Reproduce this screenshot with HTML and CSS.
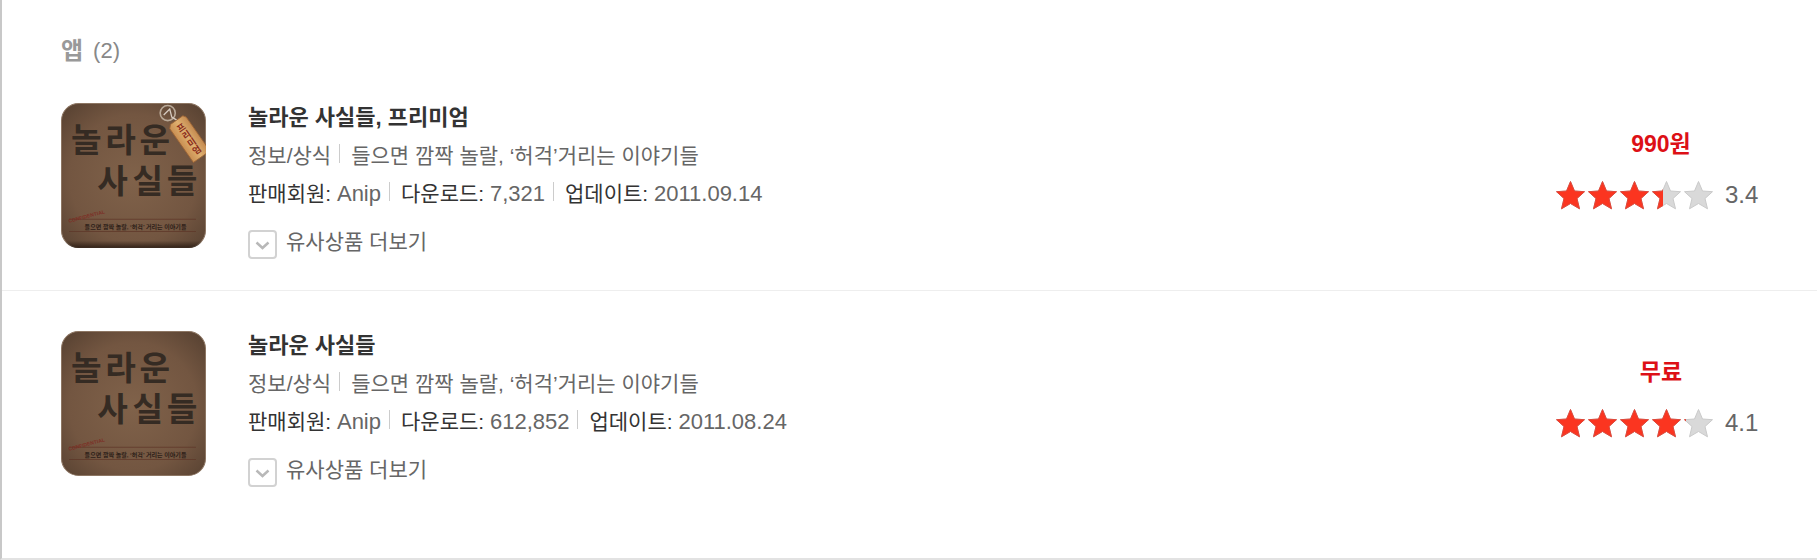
FILE: index.html
```html
<!DOCTYPE html>
<html lang="ko">
<head>
<meta charset="utf-8">
<title>앱</title>
<link rel="stylesheet" href="styles.css">
</head>
<body>
<svg class="defs" aria-hidden="true">
  <defs>
    <radialGradient id="leather" cx="50%" cy="52%" r="74%">
      <stop offset="0" stop-color="#80624a"/>
      <stop offset=".6" stop-color="#735641"/>
      <stop offset="1" stop-color="#533e2f"/>
    </radialGradient>
    <linearGradient id="gold" x1="0" y1="0" x2="1" y2="0">
      <stop offset="0" stop-color="#c98f52"/>
      <stop offset=".5" stop-color="#dfb070"/>
      <stop offset="1" stop-color="#c48a50"/>
    </linearGradient>
    <linearGradient id="base" x1="0" y1="0" x2="0" y2="1">
      <stop offset=".95" stop-color="#2b1c13" stop-opacity="0"/>
      <stop offset="1" stop-color="#2b1c13" stop-opacity=".9"/>
    </linearGradient>
    <path id="star" d="M14.500 0.500 L18.500 10 L28.500 10.700 L21 17.500 L23.500 27.800 L14.500 22.500 L5.500 27.800 L8 17.500 L0.500 10.700 L10.500 10 Z"/>
    <g id="stars">
      <use href="#star"/><use href="#star" x="32"/><use href="#star" x="64"/><use href="#star" x="96"/><use href="#star" x="128"/>
    </g>
    <g id="cover">
      <rect x=".5" y=".5" width="143" height="143" rx="17" fill="url(#leather)" stroke="#8d7663"/>
      <g class="cover-title">
        <text x="10" y="49">놀</text><text x="44" y="49">라</text><text x="78" y="49">운</text>
        <text x="36" y="89">사</text><text x="71" y="89">실</text><text x="105" y="89">들</text>
      </g>
      <path d="M8 115.500H134M8 127.500H134" stroke="#5c3527" stroke-opacity=".7"/>
      <text class="cover-stamp" x="8" y="119" transform="rotate(-15 8 119)">CONFIDENTIAL</text>
      <text class="cover-line" x="74" y="125" text-anchor="middle">들으면 깜짝 놀랄, ‘허걱’ 거리는 이야기들</text>
    </g>
  </defs>
</svg>

<main class="results">
  <h2 class="heading"><strong>앱</strong><span>(2)</span></h2>
  <ul class="list">
    <li class="item">
      <a class="thumb" href="#app1" aria-label="놀라운 사실들, 프리미엄">
        <svg viewBox="0 0 144 144">
          <use href="#cover"/>
          <rect width="144" height="144" rx="17" fill="url(#base)"/>
          <circle cx="106" cy="10" r="7.500" fill="none" stroke="#b9a998" stroke-width="1.600"/>
          <path d="M102 12l6-6 2 8 5 3" fill="none" stroke="#d6cbc0" stroke-width="1.300"/>
          <g transform="translate(112 19) rotate(-35)">
            <path d="M-7 3L-4 0H11L13 3V44H-7Z" fill="url(#gold)" stroke="#9c6435" stroke-width=".8"/>
            <g class="tag-text"><text x="3" y="12">프</text><text x="3" y="21">리</text><text x="3" y="30">미</text><text x="3" y="39">엄</text></g>
          </g>
        </svg>
      </a>
      <div class="info">
        <h3 class="title"><a href="#app1">놀라운 사실들, 프리미엄</a></h3>
        <p class="line"><span>정보/상식</span><span>들으면 깜짝 놀랄, ‘허걱’거리는 이야기들</span></p>
        <p class="line meta"><span>판매회원: <b>Anip</b></span><span>다운로드: <b>7,321</b></span><span>업데이트: <b>2011.09.14</b></span></p>
        <button class="more" type="button"><svg viewBox="0 0 29 29"><rect x="1" y="1" width="27" height="27" rx="3" fill="#fff" stroke="#d2d2d2" stroke-width="2"/><path d="M8.500 12.500l6 5.500 6-5.500" fill="none" stroke="#b8b8b8" stroke-width="2.500"/></svg><span>유사상품 더보기</span></button>
      </div>
      <div class="side">
        <strong class="price">990원</strong>
        <div class="rating">
          <span class="stars"><svg class="off" viewBox="0 0 160 29"><use href="#stars"/></svg><span class="fill" style="width:67%"><svg class="on" viewBox="0 0 160 29"><use href="#stars"/></svg></span></span>
          <span>3.4</span>
        </div>
      </div>
    </li>
    <li class="item">
      <a class="thumb" href="#app2" aria-label="놀라운 사실들"><svg viewBox="0 0 144 144"><use href="#cover"/></svg></a>
      <div class="info">
        <h3 class="title"><a href="#app2">놀라운 사실들</a></h3>
        <p class="line"><span>정보/상식</span><span>들으면 깜짝 놀랄, ‘허걱’거리는 이야기들</span></p>
        <p class="line meta"><span>판매회원: <b>Anip</b></span><span>다운로드: <b>612,852</b></span><span>업데이트: <b>2011.08.24</b></span></p>
        <button class="more" type="button"><svg viewBox="0 0 29 29"><rect x="1" y="1" width="27" height="27" rx="3" fill="#fff" stroke="#d2d2d2" stroke-width="2"/><path d="M8.500 12.500l6 5.500 6-5.500" fill="none" stroke="#b8b8b8" stroke-width="2.500"/></svg><span>유사상품 더보기</span></button>
      </div>
      <div class="side">
        <strong class="price">무료</strong>
        <div class="rating">
          <span class="stars"><svg class="off" viewBox="0 0 160 29"><use href="#stars"/></svg><span class="fill" style="width:81%"><svg class="on" viewBox="0 0 160 29"><use href="#stars"/></svg></span></span>
          <span>4.1</span>
        </div>
      </div>
    </li>
  </ul>
</main>
</body>
</html>
```
FILE: styles.css
```css
* { box-sizing: border-box; }
body {
  margin: 0;
  background: #fff;
  color: #666;
  font-family: "Liberation Sans", "Noto Sans CJK KR", sans-serif;
  font-size: 21px;
}
h2, h3, p, ul { margin: 0; padding: 0; }
a { color: inherit; text-decoration: none; }
svg { display: block; }
.defs { position: absolute; width: 0; height: 0; }

.results {
  border-left: 2px solid #c8c8c8;
  border-bottom: 2px solid #e2e2e2;
  padding-bottom: 40px;
}
.heading {
  display: flex;
  align-items: center;
  gap: 10px;
  padding: 38px 59px 0;
  height: 63px;
  font-size: 22px;
  font-weight: 400;
  line-height: 25px;
  color: #888;
}
.heading strong { font-size: 24px; font-weight: 700; color: #999; }

.list { list-style: none; }
.item {
  display: flex;
  align-items: flex-start;
  padding: 40px 51px 31px 59px;
  border-bottom: 1px solid #eee;
}
.item:last-child { border-bottom: 0; }
.thumb { flex: none; width: 145px; height: 144px; }
.cover-title { font-size: 33px; font-weight: 700; fill: #352b23; }
.cover-stamp { font-size: 5px; font-weight: 700; fill: #7c3026; }
.cover-line { font-size: 6px; font-weight: 700; fill: #2e2119; }
.tag-text { font-size: 9px; font-weight: 700; fill: #8a2d1c; text-anchor: middle; }

.info { flex: 1; min-width: 0; padding-left: 42px; }
.title {
  font-size: 22px;
  line-height: 30px;
  font-weight: 700;
  color: #333;
}
.line {
  display: flex;
  margin-top: 8px;
  line-height: 30px;
  white-space: nowrap;
}
.line span + span { display: flex; align-items: baseline; white-space: pre; }
.line span + span::before {
  content: "";
  width: 1px;
  height: 19px;
  margin: 3px 11px 0 8px;
  align-self: flex-start;
  background: #ccc;
}
.meta { color: #333; }
.meta b { font-size: 22px; font-weight: 400; color: #666; }
.more {
  display: flex;
  align-items: flex-start;
  gap: 9px;
  margin-top: 21px;
  padding: 0;
  border: 0;
  background: none;
  color: #666;
  font: inherit;
  line-height: 24px;
}
.more svg { width: 29px; height: 29px; }

.side { flex: none; width: 210px; padding-top: 27px; }
.price {
  display: block;
  font-size: 23px;
  line-height: 28px;
  text-align: center;
  color: #dd1016;
}
.rating {
  display: flex;
  align-items: center;
  gap: 9px;
  margin-top: 22px;
  font-size: 24px;
  line-height: 30px;
}
.stars { position: relative; width: 160px; height: 29px; }
.stars svg { width: 160px; height: 29px; }
.fill { position: absolute; top: 0; left: 0; overflow: hidden; }
.off { fill: #d9d9d9; stroke: #cacaca; }
.on { fill: #fb3520; stroke: #e0483a; }
```
